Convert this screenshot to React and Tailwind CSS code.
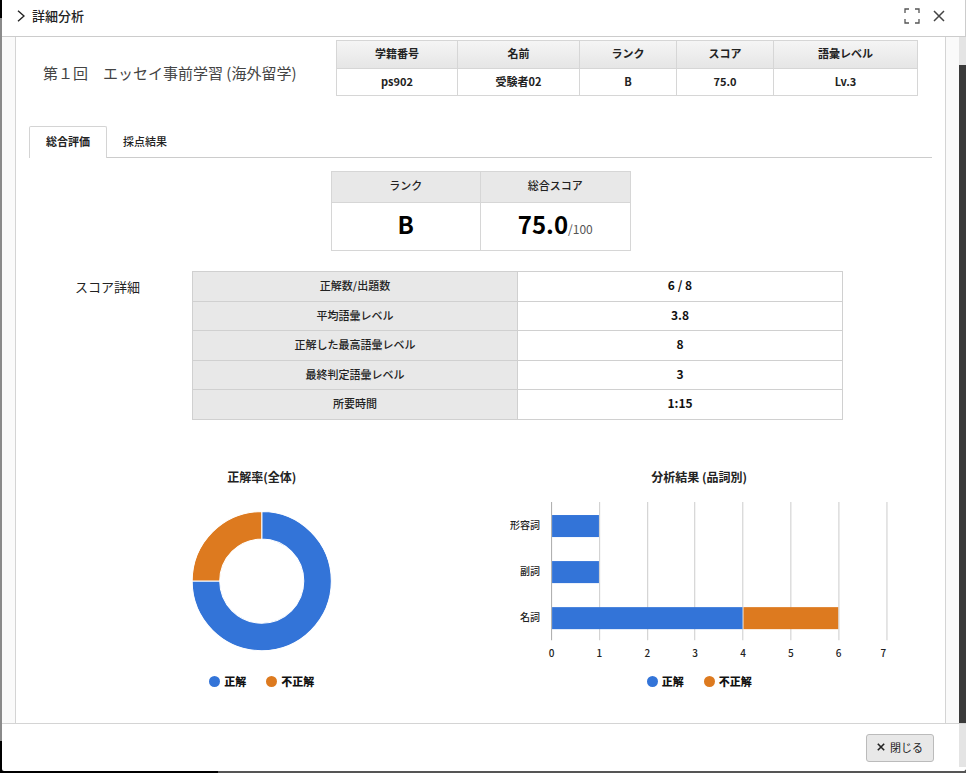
import React from 'react';

const student = [
  { head: '学籍番号', value: 'ps902', width: 'w-[121px]' },
  { head: '名前', value: '受験者02', width: 'w-[122px]' },
  { head: 'ランク', value: 'B', width: 'w-[97px]' },
  { head: 'スコア', value: '75.0', width: 'w-[97px]' },
  { head: '語彙レベル', value: 'Lv.3', width: 'w-[144px]' },
];

const details = [
  ['正解数/出題数', '6 / 8'],
  ['平均語彙レベル', '3.8'],
  ['正解した最高語彙レベル', '8'],
  ['最終判定語彙レベル', '3'],
  ['所要時間', '1:15'],
];

const bars = [
  { label: '形容詞', correct: 1, wrong: 0 },
  { label: '副詞', correct: 1, wrong: 0 },
  { label: '名詞', correct: 4, wrong: 2 },
];

const BLUE = '#3374d8';
const ORANGE = '#dd7a1f';

function Legend() {
  return (
    <ul className="flex h-[18px] items-center justify-center gap-5 text-[11px] leading-[18px] font-black text-[#111]">
      <li className="flex items-center gap-1">
        <span className="size-[11px] rounded-full bg-[#3374d8]" />
        正解
      </li>
      <li className="flex items-center gap-1">
        <span className="size-[11px] rounded-full bg-[#dd7a1f]" />
        不正解
      </li>
    </ul>
  );
}

function Donut() {
  return (
    <svg viewBox="0 0 437 186" className="block w-full" role="img" aria-label="正解率(全体)">
      <path
        d="M218.5 25.5 A69.5 69.5 0 1 1 149 95 L176.500 95 A42 42 0 1 0 218.5 53 Z"
        fill={BLUE}
        stroke="#fff"
      />
      <path d="M149 95 A69.5 69.5 0 0 1 218.5 25.5 L218.5 53 A42 42 0 0 0 176.500 95 Z" fill={ORANGE} stroke="#fff" />
    </svg>
  );
}

function BarChart() {
  const x0 = 70.5;
  const unit = 47.8;
  return (
    <svg viewBox="0 0 437 186" className="block w-full" role="img" aria-label="分析結果 (品詞別)">
      {[0, 1, 2, 3, 4, 5, 6, 7].map((n) => (
        <g key={n}>
          <line
            x1={Math.floor(x0 + n * unit) + 0.5}
            x2={Math.floor(x0 + n * unit) + 0.5}
            y1="16"
            y2="154"
            stroke={n === 0 ? '#aaa' : '#ccc'}
          />
          <text x={n === 7 ? 402 : x0 + n * unit} y="171" textAnchor="middle" fontSize="10" fontWeight="500" fill="#222">
            {n}
          </text>
        </g>
      ))}
      {bars.map((b, i) => {
        const y = 29 + i * 46;
        return (
          <g key={b.label}>
            <text x="59" y={y + 14} textAnchor="end" fontSize="10" fontWeight="500" fill="#222">
              {b.label}
            </text>
            <rect x={x0 + 0.5} y={y} width={b.correct * unit - 1} height="22" fill={BLUE} />
            {b.wrong > 0 && (
              <rect x={x0 + b.correct * unit + 0.5} y={y} width={b.wrong * unit - 1} height="22" fill={ORANGE} />
            )}
          </g>
        );
      })}
    </svg>
  );
}

export default function App() {
  return (
    <div className="flex h-screen flex-col overflow-hidden bg-black font-['Noto_Sans_CJK_JP',sans-serif] text-[11px] text-[#222]">
      <div className="flex min-h-0 flex-1">
        <div className="flex w-[2px] flex-col">
          <div className="h-[18px] bg-black" />
          <div className="flex-1 bg-[#8a8a8a]" />
          <div className="h-[30px] bg-black" />
        </div>

        <div className="flex min-w-0 flex-1 flex-col rounded-b-xs bg-white">
          <header className="flex h-[37px] shrink-0 items-center justify-between border-r border-b border-[#ccc] pr-5 pb-1 pl-[15px]">
            <h1 className="flex items-center gap-[7px] text-[13px] leading-5 font-medium">
              <svg width="8" height="12" viewBox="0 0 8 12" fill="none" stroke="#222" strokeWidth="1.4">
                <path d="M1 .8 7 6 1 11.200" />
              </svg>
              詳細分析
            </h1>
            <div className="flex items-center gap-[13px]">
              <button type="button" aria-label="全画面">
                <svg width="16" height="16" viewBox="0 0 16 16" fill="none" stroke="#555" strokeWidth="1.3" className="block">
                  <path d="M1 5V1h4M11 1h4v4M15 11v4h-4M5 15H1v-4" />
                </svg>
              </button>
              <button type="button" aria-label="ウィンドウを閉じる">
                <svg width="12" height="12" viewBox="0 0 12 12" fill="none" stroke="#444" strokeWidth="1.5" className="block">
                  <path d="M1 1l10 10M11 1 1 11" />
                </svg>
              </button>
            </div>
          </header>

          <div className="flex min-h-0 flex-1">
            <main className="min-w-0 flex-1 overflow-hidden bg-[#fafafa] px-[13px]">
              <div className="min-h-full border-x border-[#d4d4d4] bg-white pt-[3px]">
                <section className="flex items-center justify-between px-[27px]">
                  <h2 className="pt-2.5 text-[15px] leading-6 font-normal text-[#444]">第１回　エッセイ事前学習 (海外留学)</h2>
                  <table className="w-[582px] table-fixed border-collapse text-center leading-4 font-bold">
                    <thead>
                      <tr className="h-7 bg-linear-to-b from-[#f5f5f5] to-[#e5e5e5]">
                        {student.map((s) => (
                          <th key={s.head} className={`${s.width} border border-[#d6d6d6] p-0 pb-[3px]`}>
                            {s.head}
                          </th>
                        ))}
                      </tr>
                    </thead>
                    <tbody>
                      <tr className="h-[27px]">
                        {student.map((s) => (
                          <td key={s.head} className="border border-[#d6d6d6] p-0 pb-0.5">
                            {s.value}
                          </td>
                        ))}
                      </tr>
                    </tbody>
                  </table>
                </section>

                <div role="tablist" className="mx-[13px] mt-[30px] flex leading-4 font-medium">
                  <button
                    type="button"
                    role="tab"
                    aria-selected="true"
                    className="h-8 rounded-t-xs border border-b-0 border-[#d4d4d4] px-4 pb-1 font-bold"
                  >
                    総合評価
                  </button>
                  <div className="flex flex-1 border-b border-[#ccc]">
                    <button type="button" role="tab" aria-selected="false" className="px-4 pb-0.5">
                      採点結果
                    </button>
                  </div>
                </div>

                <table className="mx-auto mt-[13px] w-[300px] table-fixed border-collapse text-center">
                  <thead>
                    <tr className="h-[31px] bg-[#e8e8e8] leading-4">
                      <th className="border border-[#d6d6d6] p-0 pb-1 font-medium">ランク</th>
                      <th className="border border-[#d6d6d6] p-0 pb-1 font-medium">総合スコア</th>
                    </tr>
                  </thead>
                  <tbody>
                    <tr className="h-12 align-middle text-[24px] leading-8 font-bold text-black">
                      <td className="border border-[#d6d6d6] p-0 pb-1.5">B</td>
                      <td className="border border-[#d6d6d6] p-0 pb-1.5">
                        75.0<span className="text-[12px] leading-4 font-normal text-[#555]">/100</span>
                      </td>
                    </tr>
                  </tbody>
                </table>

                <section className="mx-[27px] mt-5 flex pl-8">
                  <h3 className="w-[117px] shrink-0 pt-1.5 text-[13px] leading-5 font-normal">スコア詳細</h3>
                  <table className="w-[651px] table-fixed border-collapse text-center leading-4">
                    <tbody>
                      {details.map(([label, value]) => (
                        <tr key={label} className="odd:h-[30px] even:h-[29px] last:h-[29px]">
                          <th scope="row" className="border border-[#d0d0d0] bg-[#e8e8e8] p-0 pb-[3px] font-medium">
                            {label}
                          </th>
                          <td className="border border-[#d0d0d0] p-0 pb-[3px] text-[12px] font-bold text-[#111]">{value}</td>
                        </tr>
                      ))}
                    </tbody>
                  </table>
                </section>

                <section className="mx-[27px] mt-12 grid grid-cols-2">
                  <div>
                    <h3 className="text-center text-[12px] leading-[18px] font-bold">正解率(全体)</h3>
                    <Donut />
                    <Legend />
                  </div>
                  <div>
                    <h3 className="text-center text-[12px] leading-[18px] font-bold">分析結果 (品詞別)</h3>
                    <BarChart />
                    <Legend />
                  </div>
                </section>
              </div>
            </main>
            <div className="flex w-[7px] flex-col bg-[#3a3a3a]">
              <div className="h-7 bg-[#e4e4e4]" />
            </div>
          </div>

          <footer className="flex h-12 shrink-0 border-t border-[#d4d4d4]">
            <div className="flex flex-1 items-center justify-end pr-[25px]">
              <button
                type="button"
                className="flex h-7 w-[68px] items-center justify-center gap-[5px] rounded-[3px] border border-[#bbb] bg-[#e8e8e8] pb-0.5 leading-4"
              >
                <svg width="8" height="8" viewBox="0 0 8 8" stroke="#222" strokeWidth="1.6">
                  <path d="M.8.8l6.400 6.400M7.200.8.8 7.200" />
                </svg>
                閉じる
              </button>
            </div>
            <div className="mb-1 w-[7px] bg-[#e4e4e4]" />
          </footer>
        </div>
      </div>
      <div className="flex h-[2px] shrink-0">
        <div className="w-[218px] bg-black" />
        <div className="flex-1 bg-[#555]" />
      </div>
    </div>
  );
}
